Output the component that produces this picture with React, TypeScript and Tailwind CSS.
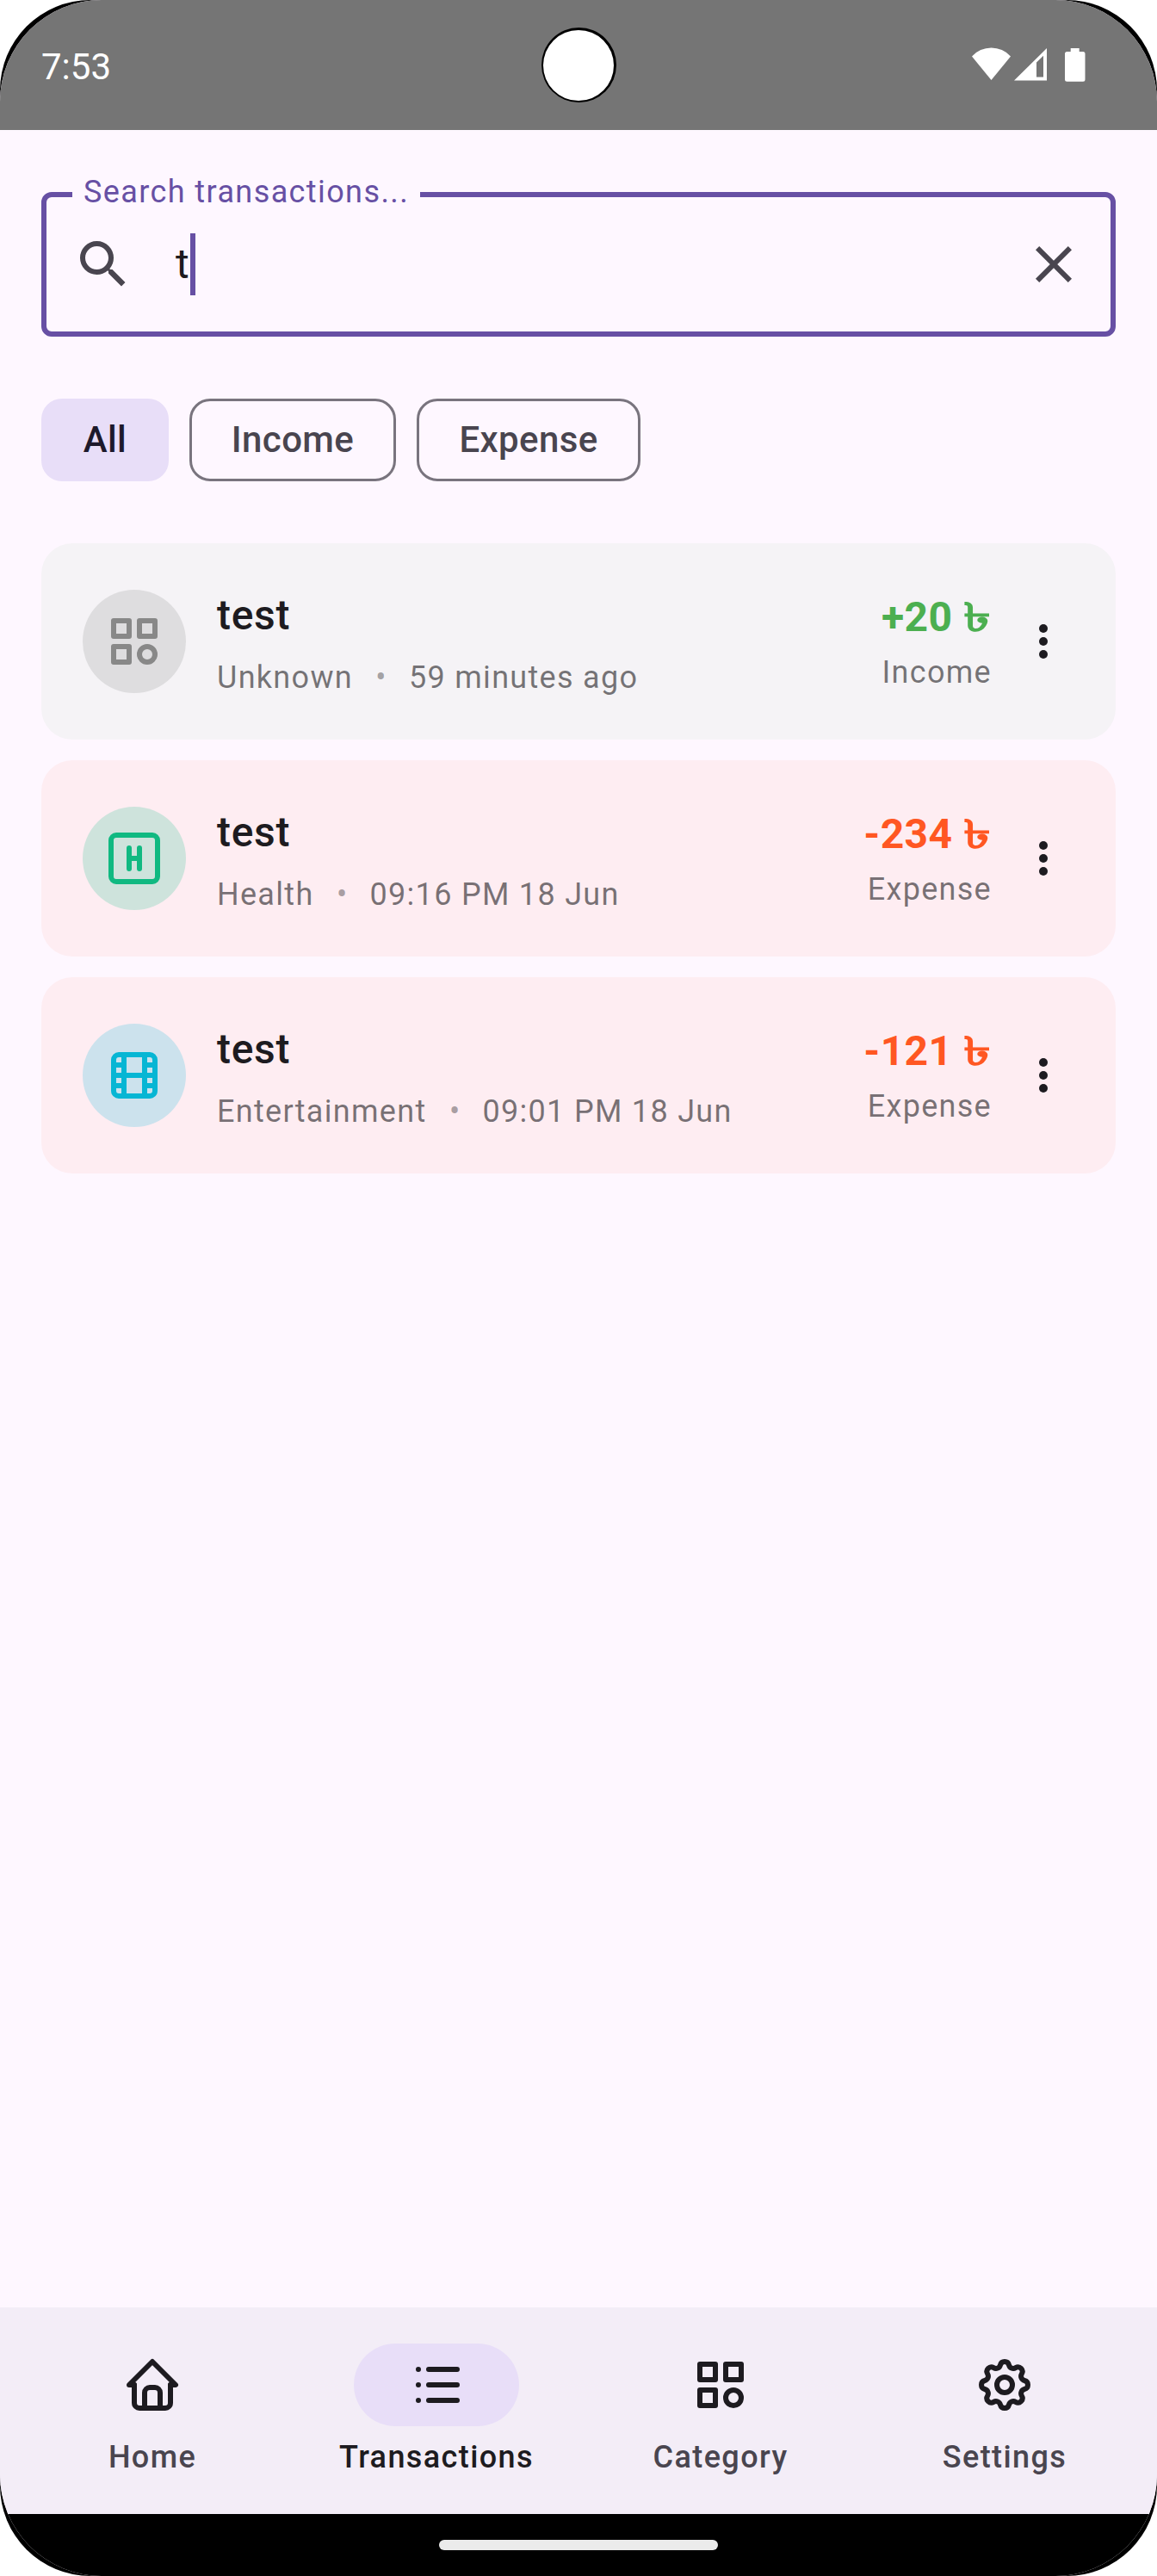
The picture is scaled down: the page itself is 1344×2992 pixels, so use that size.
import React from "react";

type IconProps = { className?: string };

function Outline({ className = "", children }: { className?: string; children: React.ReactNode }) {
  return (
    <svg
      viewBox="0 0 24 24"
      className={`size-[72px] shrink-0 ${className}`}
      fill="none"
      stroke="currentColor"
      strokeWidth={2}
      strokeLinecap="round"
      strokeLinejoin="round"
    >
      {children}
    </svg>
  );
}

const HomeIcon = (p: IconProps) => (
  <Outline {...p}>
    <path d="M5 12H3l9-9 9 9h-2" />
    <path d="M5 12v7a2 2 0 0 0 2 2h10a2 2 0 0 0 2-2v-7" />
    <path d="M9 21v-6a2 2 0 0 1 2-2h2a2 2 0 0 1 2 2v6" />
  </Outline>
);

const ListIcon = (p: IconProps) => (
  <Outline {...p}>
    <path d="M9 6h11M9 12h11M9 18h11M5 6v.01M5 12v.01M5 18v.01" />
  </Outline>
);

const CategoryIcon = (p: IconProps) => (
  <Outline {...p}>
    <path d="M4 4h6v6H4zM14 4h6v6h-6zM4 14h6v6H4z" />
    <circle cx="17" cy="17" r="3" />
  </Outline>
);

const SettingsIcon = (p: IconProps) => (
  <Outline {...p}>
    <path d="M10.325 4.317c.426-1.756 2.924-1.756 3.35 0a1.724 1.724 0 0 0 2.573 1.066c1.543-.94 3.31.826 2.37 2.37a1.724 1.724 0 0 0 1.065 2.572c1.756.426 1.756 2.924 0 3.35a1.724 1.724 0 0 0-1.066 2.573c.94 1.543-.826 3.31-2.37 2.37a1.724 1.724 0 0 0-2.572 1.065c-.426 1.756-2.924 1.756-3.35 0a1.724 1.724 0 0 0-2.573-1.066c-1.543.94-3.31-.826-2.37-2.37a1.724 1.724 0 0 0-1.065-2.572c-1.756-.426-1.756-2.924 0-3.35a1.724 1.724 0 0 0 1.066-2.573c-.94-1.543.826-3.31 2.37-2.37 1 .608 2.296.07 2.572-1.065z" />
    <circle cx="12" cy="12" r="3" />
  </Outline>
);

const HealthIcon = (p: IconProps) => (
  <Outline {...p}>
    <rect x="3" y="3" width="18" height="18" rx="2" />
    <path d="M10 16V8M14 8v8M10 12h4" />
  </Outline>
);

const MovieIcon = (p: IconProps) => (
  <Outline {...p}>
    <rect x="4" y="4" width="16" height="16" rx="2" />
    <path d="M8 4v16M16 4v16M4 8h4M4 16h4M4 12h16M16 8h4M16 16h4" />
  </Outline>
);

function StatusBar() {
  return (
    <header className="relative flex h-[151px] shrink-0 items-start justify-between bg-[#757575] px-12 text-white">
      <span className="pt-[53px] text-[42px] leading-[49px]">7:53</span>
      <svg viewBox="0 0 140 50" className="mt-[50px] mr-[28px] h-[50px] w-[140px]" fill="currentColor">
        <path d="M1 15.500A30.300 30.300 0 0 1 46 15.500L23.500 43z" />
        <path fillRule="evenodd" d="M50 43.400 88 6v37.400zM76 22.500v17h8V14.800z" />
        <path d="M115.700 6h10v4h4.300a2.500 2.500 0 0 1 2.500 2.500v29.800a2.500 2.500 0 0 1-2.500 2.500h-18.500a2.500 2.500 0 0 1-2.500-2.500V12.500a2.500 2.500 0 0 1 2.500-2.500h4.200z" />
      </svg>
      <div className="absolute top-8 left-[628.500px] size-[87px] rounded-full bg-black">
        <div className="absolute top-[3px] left-[2.500px] size-[82px] rounded-full bg-white" />
      </div>
    </header>
  );
}

function SearchField() {
  return (
    <div className="relative flex h-[168px] items-center rounded-[12px] border-[6px] border-[#6750A4] px-[30px]">
      <span className="absolute -top-[30px] left-[30px] w-[404px] bg-[#FEF7FF] pl-[13px] text-[36px] leading-[48px] tracking-[1.4px] whitespace-nowrap text-[#6750A4]">
        Search transactions...
      </span>
      <svg viewBox="0 0 24 24" className="size-[72px] text-[#49454F]" fill="currentColor">
        <path d="M15.500 14h-.79l-.28-.27A6.471 6.471 0 0 0 16 9.500 6.500 6.500 0 1 0 9.500 16c1.610 0 3.090-.59 4.230-1.570l.27.28v.79l5 4.990L20.490 19l-4.990-5zm-6 0C7.010 14 5 11.990 5 9.500S7.010 5 9.500 5 14 7.010 14 9.500 11.990 14 9.500 14z" />
      </svg>
      <div className="ml-12 flex grow items-center">
        <span className="w-[17px] text-[48px] leading-[72px] text-[#1D1B20]">t</span>
        <span className="h-[72px] w-[6px] bg-[#6750A4]" />
      </div>
      <svg viewBox="0 0 24 24" className="size-[72px] text-[#49454F]" fill="currentColor">
        <path d="M19 6.410 17.590 5 12 10.590 6.410 5 5 6.410 10.590 12 5 17.590 6.410 19 12 13.410 17.590 19 19 17.590 13.410 12z" />
      </svg>
    </div>
  );
}

function Filters() {
  const base =
    "flex h-24 items-center justify-center rounded-[24px] text-[42px] leading-[60px] font-medium tracking-[0.4px]";
  return (
    <div className="mt-[72px] flex gap-6">
      <button className={`${base} w-[148px] bg-[#E8DEF8] text-[#1D192B]`}>All</button>
      <button className={`${base} w-[240px] border-[3px] border-[#79747E] text-[#49454F]`}>Income</button>
      <button className={`${base} w-[260px] border-[3px] border-[#79747E] text-[#49454F]`}>Expense</button>
    </div>
  );
}

type Row = {
  icon: React.ReactNode;
  circle: string;
  card: string;
  category: string;
  time: string;
  amount: string;
  amountColor: string;
  kind: string;
};

const rows: Row[] = [
  {
    icon: <CategoryIcon />,
    circle: "bg-[#DEDDDF] text-[#888888]",
    card: "bg-[#F5F3F6]",
    category: "Unknown",
    time: "59 minutes ago",
    amount: "+20",
    amountColor: "text-[#4CAF50]",
    kind: "Income",
  },
  {
    icon: <HealthIcon />,
    circle: "bg-[#CEE3DC] text-[#10B981]",
    card: "bg-[#FEEDF2]",
    category: "Health",
    time: "09:16 PM 18 Jun",
    amount: "-234",
    amountColor: "text-[#FF5722]",
    kind: "Expense",
  },
  {
    icon: <MovieIcon />,
    circle: "bg-[#CCE2ED] text-[#06B6D4]",
    card: "bg-[#FEEDF2]",
    category: "Entertainment",
    time: "09:01 PM 18 Jun",
    amount: "-121",
    amountColor: "text-[#FF5722]",
    kind: "Expense",
  },
];

function TransactionCard({ row }: { row: Row }) {
  return (
    <li className={`flex h-[228px] items-center rounded-[36px] px-12 ${row.card}`}>
      <div className={`flex size-[120px] shrink-0 items-center justify-center rounded-full ${row.circle}`}>
        {row.icon}
      </div>
      <div className="ml-9 flex grow flex-col gap-3">
        <span className="text-[48px] leading-[72px] font-medium tracking-[0.7px] text-[#1D1B20]">test</span>
        <div className="flex gap-6 text-[36px] leading-[48px] tracking-[1.3px] text-[#1D1B20]/60">
          <span>{row.category}</span>
          <span className="w-[17px] text-center tracking-normal text-[#1D1B20]/40">•</span>
          <span>{row.time}</span>
        </div>
      </div>
      <div className="flex flex-col items-end gap-1 pb-1">
        <div
          className={`flex h-[72px] items-baseline text-[48px] leading-[72px] font-bold tracking-[0.45px] ${row.amountColor}`}
        >
          <span className="whitespace-pre">{row.amount} </span>
          <span className="w-[33px]">
            <span className="inline-block origin-[0_50px] scale-x-[1.33] scale-y-[0.95] tracking-normal">৳</span>
          </span>
        </div>
        <span className="text-[36px] leading-[48px] tracking-[1.3px] text-[#1D1B20]/60">{row.kind}</span>
      </div>
      <button className="ml-6 flex size-[72px] items-center justify-center text-[#1D1B20]">
        <svg viewBox="0 0 24 24" className="size-[60px]" fill="currentColor">
          <circle cx="12" cy="6" r="2" />
          <circle cx="12" cy="12" r="2" />
          <circle cx="12" cy="18" r="2" />
        </svg>
      </button>
    </li>
  );
}

const tabs = [
  { label: "Home", icon: <HomeIcon />, active: false },
  { label: "Transactions", icon: <ListIcon />, active: true },
  { label: "Category", icon: <CategoryIcon />, active: false },
  { label: "Settings", icon: <SettingsIcon />, active: false },
];

function BottomNav() {
  return (
    <nav className="grid h-[240px] shrink-0 grid-cols-4 bg-[#F3EDF7] px-3">
      {tabs.map((t) => (
        <div key={t.label} className="flex flex-col items-center justify-center gap-3">
          <div
            className={`flex h-24 w-48 items-center justify-center rounded-full text-[#1D1B20] ${
              t.active ? "bg-[#E8DEF8]" : ""
            }`}
          >
            {t.icon}
          </div>
          <span
            className={`text-[36px] leading-[48px] font-medium tracking-[1.4px] ${
              t.active ? "text-[#1D1B20]" : "text-[#49454F]"
            }`}
          >
            {t.label}
          </span>
        </div>
      ))}
    </nav>
  );
}

export default function App() {
  return (
    <div className="h-[2992px] w-[1344px] bg-white font-['Roboto','Noto_Sans',sans-serif]">
      <div className="h-full overflow-hidden rounded-[105px] bg-black">
        <div className="flex h-full flex-col overflow-hidden rounded-[118px] bg-[#FEF7FF]">
          <StatusBar />
          <main className="flex grow flex-col px-12 pt-[72px]">
            <SearchField />
            <Filters />
            <ul className="mt-[72px] flex flex-col gap-6">
              {rows.map((row) => (
                <TransactionCard key={row.category} row={row} />
              ))}
            </ul>
          </main>
          <BottomNav />
          <footer className="flex h-[72px] shrink-0 items-start justify-center bg-black pt-[30px]">
            <div className="h-3 w-[324px] rounded-full bg-[#EBEBEB]" />
          </footer>
        </div>
      </div>
    </div>
  );
}
